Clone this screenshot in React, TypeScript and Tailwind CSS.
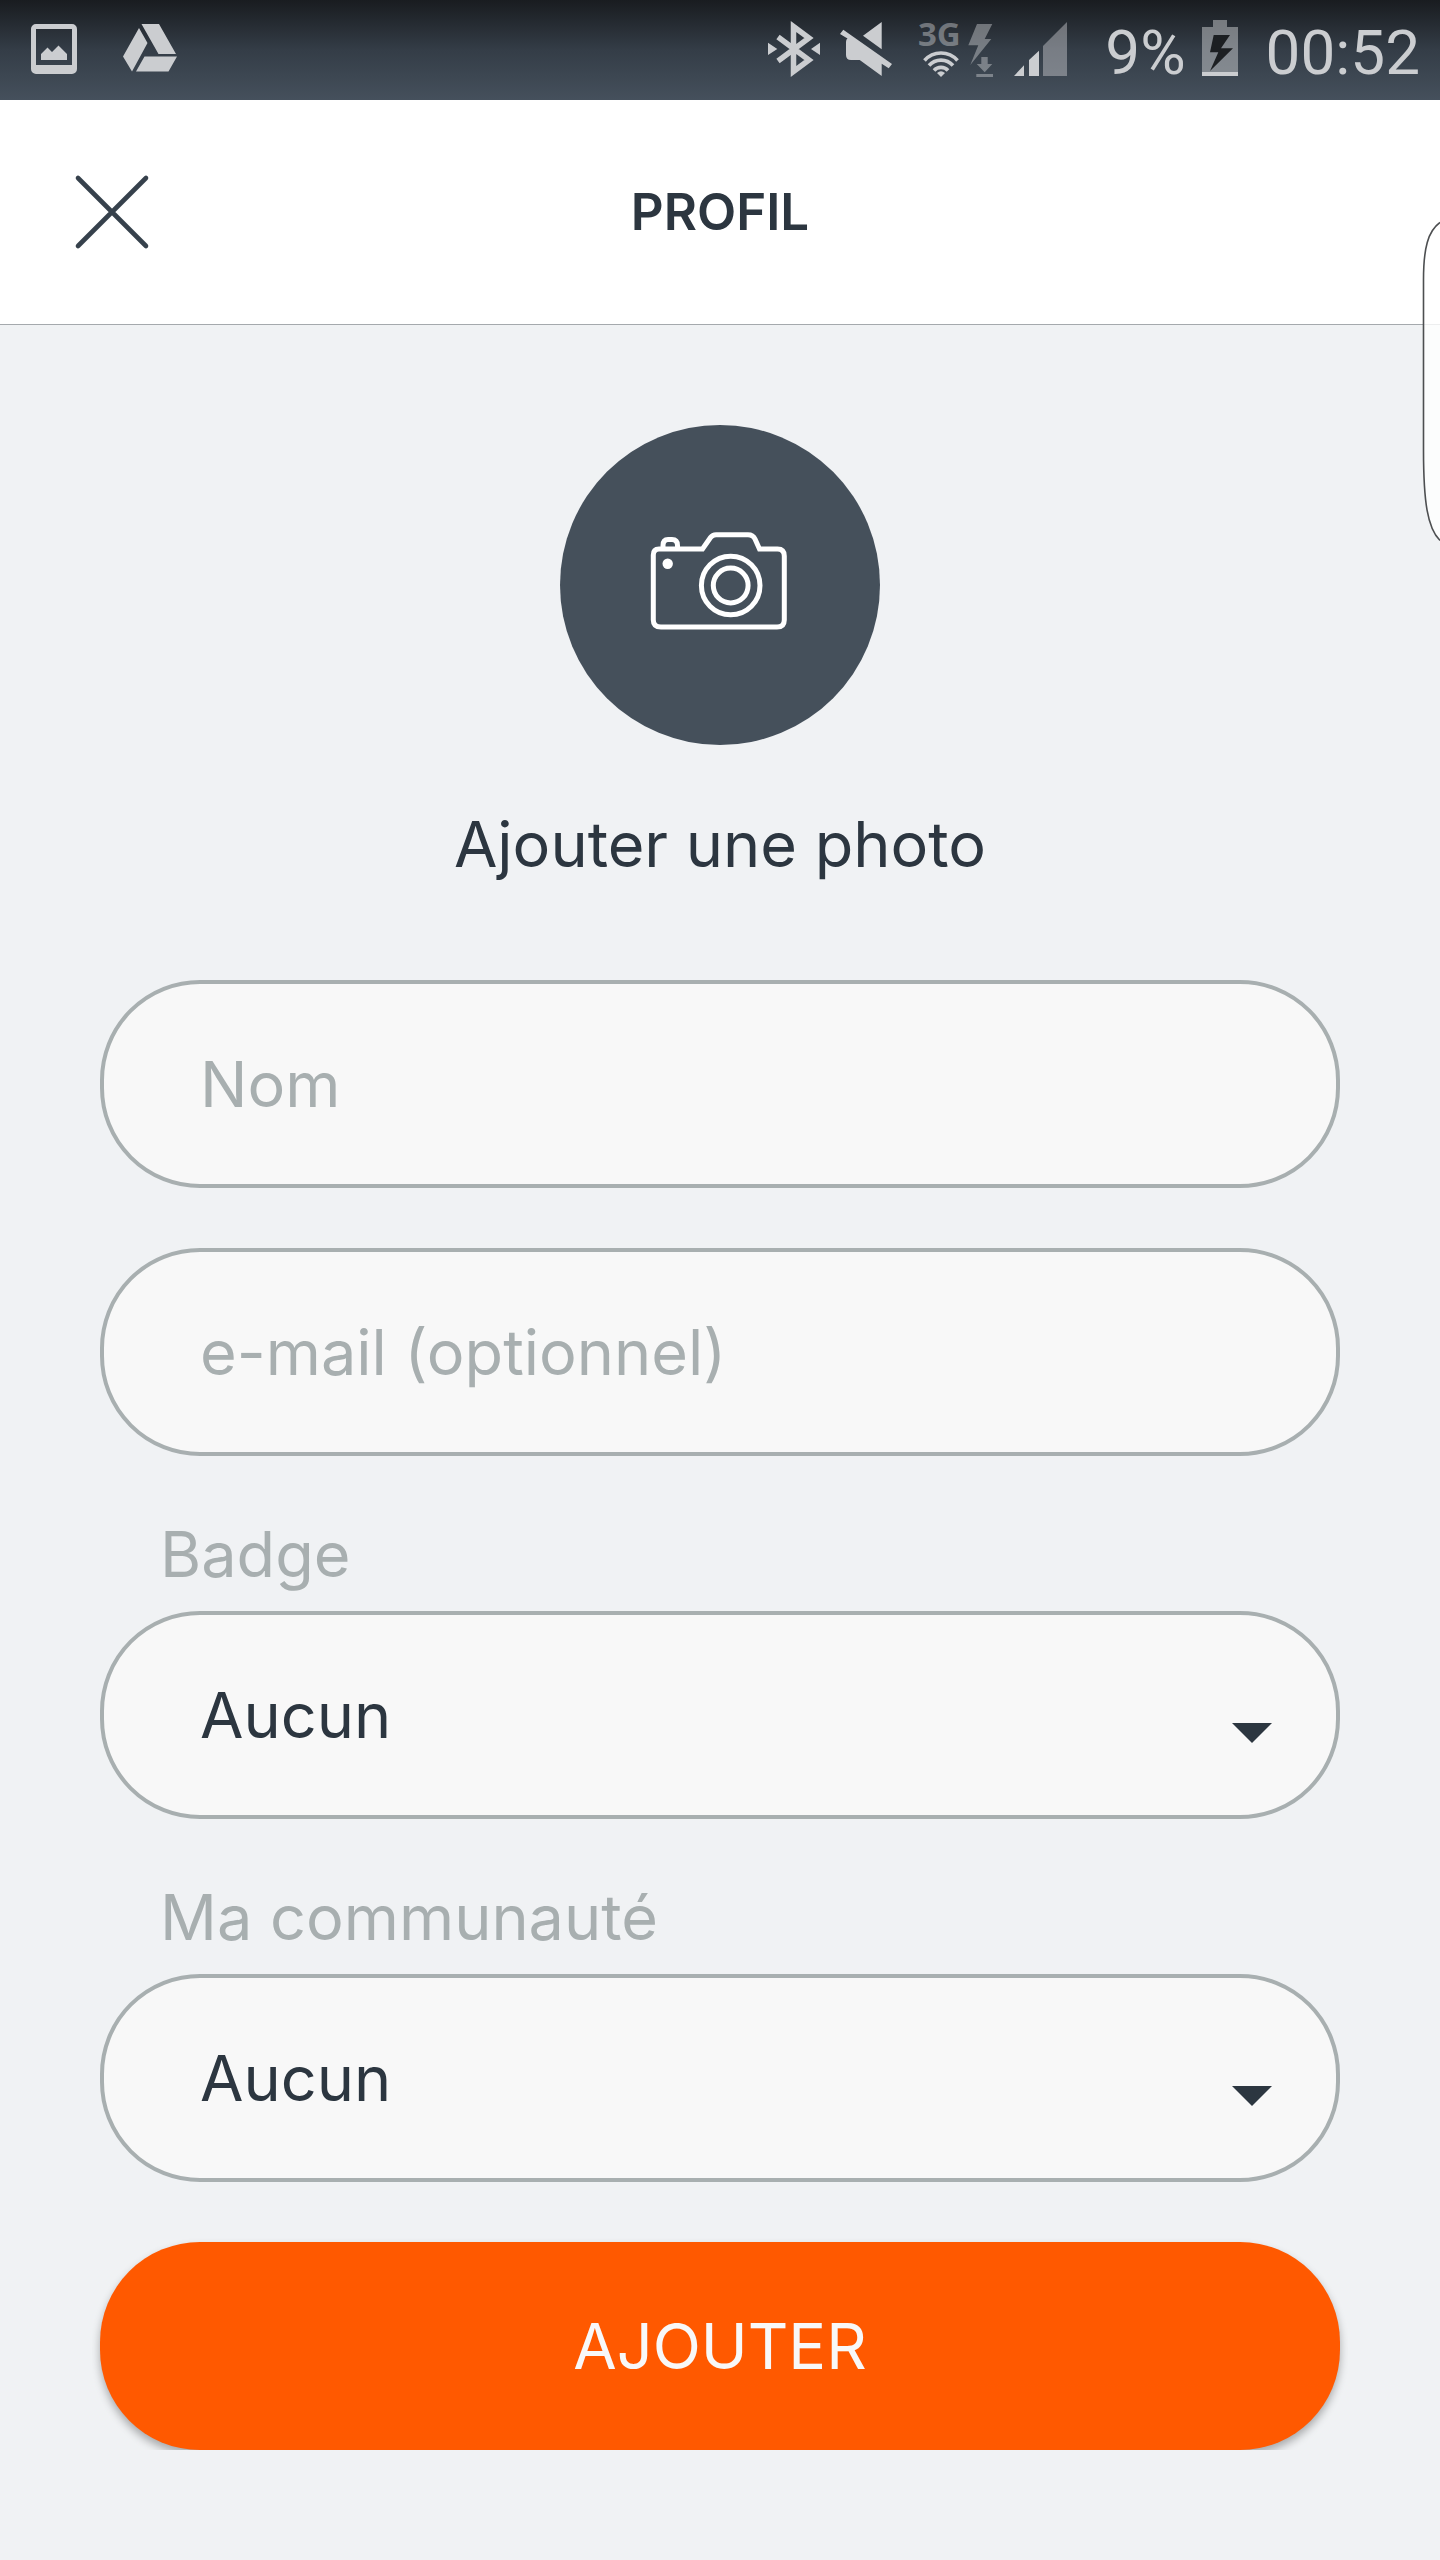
import { useState } from "react";
import type { ReactNode } from "react";

const OPTIONS = ["Aucun"];

export default function App() {
	const [name, setName] = useState("");
	const [email, setEmail] = useState("");
	const [badge, setBadge] = useState("Aucun");
	const [community, setCommunity] = useState("Aucun");

	return (
		<div className="relative flex min-h-screen flex-col overflow-hidden bg-[#f0f2f4] font-['Inter',sans-serif] text-[#2c3640]">
			<StatusBar />

			<header className="grid h-[225px] grid-cols-[1fr_auto_1fr] items-center border-b border-[#a5a9ad] bg-white px-[72px]">
				<button type="button" aria-label="Fermer" className="w-20">
					<CloseIcon />
				</button>
				<h1 className="text-[51px] leading-[60px] font-semibold">PROFIL</h1>
			</header>

			<form
				className="flex flex-col px-[100px] pt-[100px]"
				onSubmit={(e) => e.preventDefault()}
			>
				<button
					type="button"
					className="flex flex-col items-center gap-[63px] self-center"
				>
					<span className="size-80 rounded-full bg-[#45505b]">
						<CameraIcon />
					</span>
					<span className="text-[63px] leading-[72px]">Ajouter une photo</span>
				</button>

				<div className="mt-[100px] flex flex-col gap-[60px]">
					<TextField label="Nom" type="text" value={name} onChange={setName} />
					<TextField
						label="e-mail (optionnel)"
						type="email"
						value={email}
						onChange={setEmail}
					/>
					<SelectField
						id="badge"
						label="Badge"
						value={badge}
						onChange={setBadge}
					/>
					<SelectField
						id="community"
						label="Ma communauté"
						value={community}
						onChange={setCommunity}
					/>
					{/* The wrapper cuts the shadow off under the button */}
					<div className="-mx-2 -mt-2 overflow-hidden px-2 pt-2">
						<button
							type="submit"
							className="h-[208px] w-full rounded-[100px] bg-[#ff5900] text-[63px] text-[#f8f8f8] shadow-[0_5px_8px_rgba(0,0,0,0.3)]"
						>
							AJOUTER
						</button>
					</div>
				</div>
			</form>

			<EdgeHandle />
		</div>
	);
}

interface TextFieldProps {
	label: string;
	type: string;
	value: string;
	onChange: (value: string) => void;
}

function TextField({ label, type, value, onChange }: TextFieldProps) {
	return (
		<input
			type={type}
			aria-label={label}
			placeholder={label}
			value={value}
			onChange={(e) => onChange(e.target.value)}
			className="h-[208px] w-full rounded-[100px] border-4 border-[#a8afb0] bg-[#f8f8f8] px-24 text-[63px] placeholder:text-[#a8afb0] focus:outline-none"
		/>
	);
}

interface SelectFieldProps {
	id: string;
	label: string;
	value: string;
	onChange: (value: string) => void;
}

function SelectField({ id, label, value, onChange }: SelectFieldProps) {
	return (
		<div className="flex flex-col gap-[19px]">
			<label
				htmlFor={id}
				className="px-[60px] text-[63px] leading-[76px] text-[#a8afb0]"
			>
				{label}
			</label>
			<div className="relative">
				<select
					id={id}
					value={value}
					onChange={(e) => onChange(e.target.value)}
					className="h-[208px] w-full appearance-none rounded-[100px] border-4 border-[#a8afb0] bg-[#f8f8f8] px-24 text-[63px] focus:outline-none"
				>
					{OPTIONS.map((option) => (
						<option key={option}>{option}</option>
					))}
				</select>
				<svg
					viewBox="0 0 40 20"
					className="pointer-events-none absolute right-17 bottom-19 h-5 w-10"
					fill="#2c3640"
					aria-hidden="true"
				>
					<path d="M0 0h40L20 20z" />
				</svg>
			</div>
		</div>
	);
}

function StatusBar() {
	return (
		<div className="flex h-[100px] items-center justify-between bg-linear-to-b from-[#191c20] via-[#343d47] to-[#45505c] pr-5 pl-7 font-['Roboto',sans-serif] text-[#cbcdd0]">
			<div className="flex items-center gap-10">
				{/* Screenshot */}
				<StatusIcon width={54} className="w-[54px]">
					<path
						fillRule="evenodd"
						d="M8 24h36a5 5 0 0 1 5 5v40a5 5 0 0 1-5 5H8a5 5 0 0 1-5-5V29a5 5 0 0 1 5-5zM8 29v36h36V29z"
					/>
					<path d="M13 54l6.500-6.500 4.500 4.500 6.500-6.500 8.500 8.500v6H13z" />
				</StatusIcon>
				{/* Drive */}
				<StatusIcon width={56} className="w-14">
					<path d="M19.500 24H37l17 30H36.500zM17 28l8.500 15L10 71.500 1 56.500zM22.500 56.500H55l-8.500 15H14z" />
				</StatusIcon>
			</div>

			<div className="flex items-center">
				<StatusIcon width={340} className="w-[340px]">
					{/* Bluetooth */}
					<path d="M19 42.700v12.300l9.300-6zM71 42.700v12.300l-9-6z" />
					<path
						d="M29 37l31 23-15.500 11.500v-45L60 38 29 61"
						fill="none"
						stroke="currentColor"
						strokeWidth="5.500"
					/>
					{/* Muted speaker */}
					<path d="M132.700 22v27.300L114 35.700zM94.300 29.700L143 64l-3.300 4.300-7-4.500V76l-22-16H102q-5 0-5-5V42q0-3 1.500-3.500L91 34z" />
					{/* 3G with wifi */}
					<text
						x="169"
						y="46"
						fontSize="33"
						fontWeight="700"
						fontFamily="Open Sans, sans-serif"
						opacity="0.45"
					>
						3G
					</text>
					<g fill="none" stroke="currentColor" strokeWidth="3.600">
						<path d="M175.500 60.500a22 22 0 0 1 33 0" />
						<path d="M180 65.500a16 16 0 0 1 24 0" />
						<path d="M185 70.500a9.500 9.500 0 0 1 14 0" />
					</g>
					<path d="M192 77l-4-4q4-3.500 8 0z" />
					<g opacity="0.45">
						<path d="M228 24h15.300l-7.600 15h6.600l-21 26 8-19.700h-10z" />
						<path d="M232.300 57h6.400v7h4.600l-7.600 8.300-8-8.300h4.600zM227.300 74H244v3h-16.700z" />
					</g>
					{/* Signal */}
					<path d="M265 76l10-10.700V76zM280 76V60l10-9.300V76z" />
					<path d="M294 76V46l24-24v54z" opacity="0.45" />
				</StatusIcon>
				<span className="ml-4 pt-1 text-[62px]">9%</span>
				<StatusIcon width={36} className="ml-4 w-9">
					<path d="M0 27h11v-7h14v7h11v45H0z" opacity="0.5" />
					<path d="M0 72h36v4H0z" />
					<path
						d="M11.700 35H28l-9 13.300h12L8 71l8.300-18.700H8z"
						fill="#1c1f22"
					/>
				</StatusIcon>
				<span className="ml-7 pt-1 text-[62px]">00:52</span>
			</div>
		</div>
	);
}

interface StatusIconProps {
	width: number;
	className: string;
	children: ReactNode;
}

function StatusIcon({ width, className, children }: StatusIconProps) {
	return (
		<svg
			viewBox={`0 0 ${width} 100`}
			className={`h-[100px] ${className}`}
			fill="currentColor"
			aria-hidden="true"
		>
			{children}
		</svg>
	);
}

function CloseIcon() {
	return (
		<svg
			viewBox="0 0 80 80"
			className="size-20"
			fill="none"
			stroke="#36414c"
			strokeWidth="4.600"
			strokeLinecap="round"
			aria-hidden="true"
		>
			<path d="M6 6l68 68M74 6L6 74" />
		</svg>
	);
}

function CameraIcon() {
	return (
		<svg
			viewBox="20 25 320 320"
			className="size-80"
			fill="none"
			stroke="#fff"
			strokeWidth="5"
			aria-hidden="true"
		>
			<path d="M119 149h43.500l8-11.500q2-2.800 5.500-2.800h32q5 0 7 4.300l4.500 10h18q6.800 0 6.800 7v64q0 7-7.300 7H121q-7.700 0-7.700-7v-65q0-6 5.700-6z" />
			<path d="M123 149v-3.500q0-6 5-6h4q5.500 0 5.500 6v3.500" />
			<circle cx="190.700" cy="185.500" r="29.300" />
			<circle cx="190.700" cy="185.500" r="17.400" />
			<circle cx="127.700" cy="163.700" r="5.200" fill="#fff" stroke="none" />
		</svg>
	);
}

function EdgeHandle() {
	return (
		<svg
			viewBox="0 0 18 330"
			className="absolute top-[218px] right-0 h-[330px] w-[18px]"
			aria-hidden="true"
		>
			<path
				d="M18 4.500C6 13 1.500 30 1.500 62v170c0 52 4 78 16.500 90.500"
				fill="#fff"
				fillOpacity="0.8"
				stroke="#4d4f51"
				strokeWidth="1.600"
			/>
		</svg>
	);
}
